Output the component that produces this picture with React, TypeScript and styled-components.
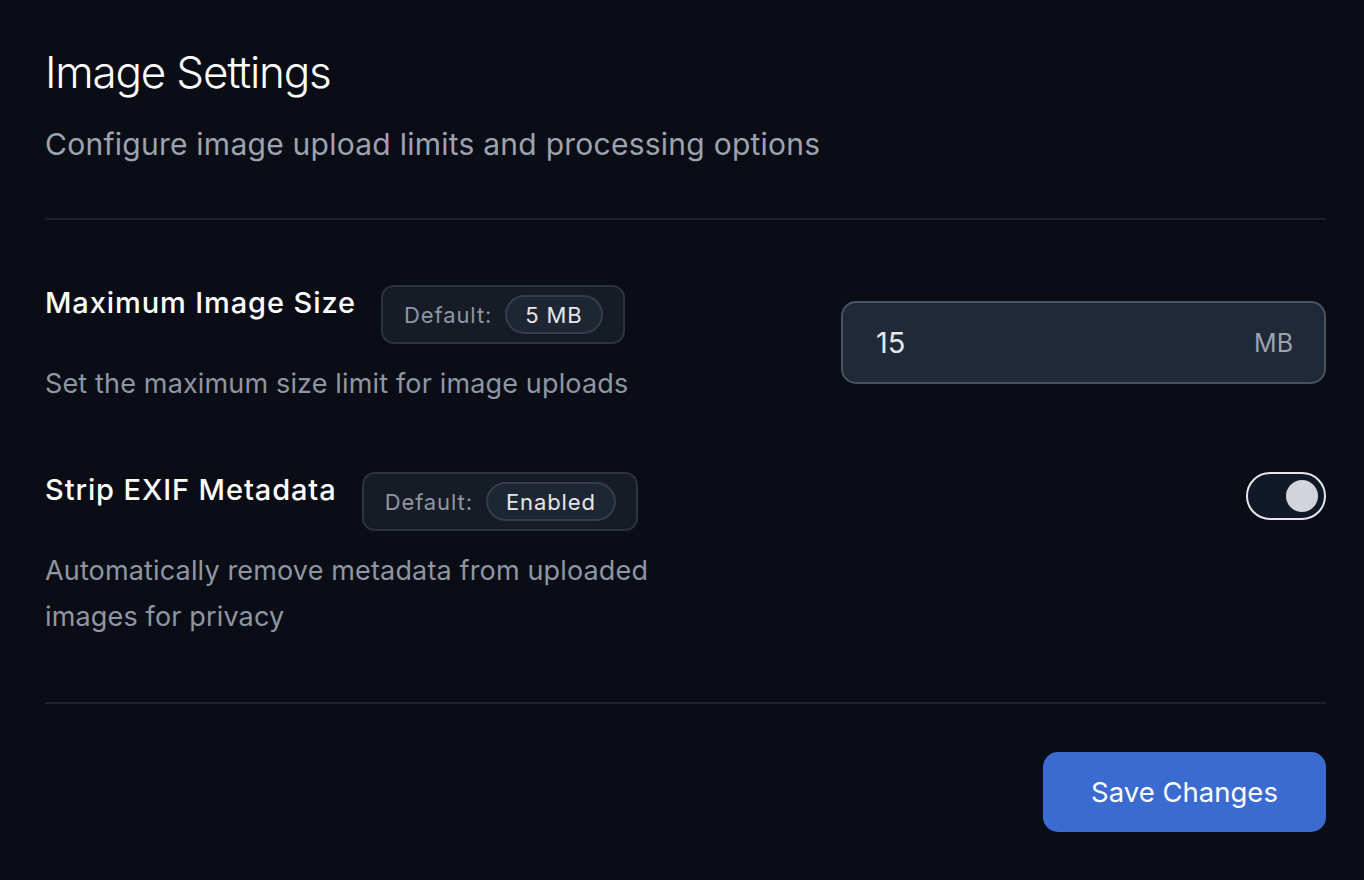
import {FC, useState} from "react";
import styled, {createGlobalStyle} from "styled-components";

const GlobalStyle = createGlobalStyle`
  html, body {
    margin: 0;
    padding: 0;
    background: #0a0d16;
  }
  body {
    font-family: Inter, "Noto Sans", "Liberation Sans", sans-serif;
    color: #f3f4f6;
  }
  * {
    box-sizing: border-box;
  }
`

const Page = styled.div`
  width: 1364px;
  min-height: 880px;
  padding: 42px 38px 0 45px;
`

const Header = styled.header`
  padding-bottom: 54px;
  border-bottom: 2px solid #1c212c;
`

const Title = styled.h1`
  margin: 0;
  font-size: 44px;
  font-weight: 300;
  letter-spacing: -1.2px;
  line-height: 60px;
  color: #ffffff;
`

const Subtitle = styled.p`
  margin: 22px 0 0;
  font-size: 30px;
  line-height: 40px;
  font-weight: 400;
  letter-spacing: 0.25px;
  color: #9ca3af;
`

const Rows = styled.div`
  display: flex;
  flex-direction: column;
  gap: 65px;
  padding: 65px 0 62px;
  border-bottom: 2px solid #1c212c;
`

const Row = styled.div`
  display: flex;
  justify-content: space-between;
  align-items: flex-start;
`

const Info = styled.div`
  max-width: 640px;
`

const LabelLine = styled.div`
  display: flex;
  align-items: flex-start;
  gap: 25px;
`

const Label = styled.span`
  font-size: 29px;
  line-height: 36px;
  font-weight: 500;
  color: #ffffff;
  letter-spacing: 0.9px;
`

const DefaultBadge = styled.span`
  display: inline-flex;
  align-items: center;
  gap: 13px;
  height: 59px;
  padding: 0 20px 0 21px;
  border: 2px solid #2b3240;
  border-radius: 13px;
  background: #161b26;
  font-size: 22px;
  letter-spacing: 0.9px;
  color: #8e96a4;
`

const DefaultValue = styled.span`
  display: inline-flex;
  align-items: center;
  height: 39px;
  padding: 0 18px;
  border: 2px solid #343c4b;
  border-radius: 20px;
  background: #1f2633;
  color: #e5e7eb;
  font-size: 22px;
`

const Description = styled.p`
  margin: 17px 0 0;
  font-size: 27px;
  line-height: 46px;
  letter-spacing: 0.15px;
  color: #8e96a4;
`

const NumberField = styled.label`
  display: flex;
  align-items: center;
  justify-content: space-between;
  width: 485px;
  height: 83px;
  margin-top: 16px;
  padding: 0 31px 0 33px;
  border: 2px solid #4a5261;
  border-radius: 15px;
  background: #202938;
`

const NumberInput = styled.input`
  width: 200px;
  border: none;
  outline: none;
  background: transparent;
  font-family: inherit;
  font-size: 29px;
  color: #e5e7eb;
  padding: 0;
`

const Unit = styled.span`
  font-size: 25px;
  color: #9ca3af;
`

const Toggle = styled.button<{ $on: boolean }>`
  position: relative;
  width: 80px;
  height: 48px;
  padding: 0;
  border: 2px solid #e5e7eb;
  border-radius: 24px;
  background: #111827;
  cursor: pointer;

  &::after {
    content: "";
    position: absolute;
    top: 6px;
    left: ${props => props.$on ? '38px' : '6px'};
    width: 32px;
    height: 32px;
    border-radius: 50%;
    background: #d1d5db;
  }
`

const Footer = styled.div`
  display: flex;
  justify-content: flex-end;
  padding-top: 48px;
`

const SaveButton = styled.button`
  width: 283px;
  height: 80px;
  border: none;
  border-radius: 15px;
  background: #3b6bd0;
  color: #ffffff;
  font-family: inherit;
  font-size: 27.5px;
  font-weight: 400;
  cursor: pointer;
`

const App: FC = () => {
    const [size, setSize] = useState("15")
    const [strip, setStrip] = useState(true)

    return (
        <Page>
            <GlobalStyle/>
            <Header>
                <Title>Image Settings</Title>
                <Subtitle>Configure image upload limits and processing options</Subtitle>
            </Header>

            <Rows>
                <Row>
                    <Info>
                        <LabelLine>
                            <Label>Maximum Image Size</Label>
                            <DefaultBadge>Default: <DefaultValue>5 MB</DefaultValue></DefaultBadge>
                        </LabelLine>
                        <Description>Set the maximum size limit for image uploads</Description>
                    </Info>
                    <NumberField>
                        <NumberInput value={size} onChange={e => setSize(e.target.value)}/>
                        <Unit>MB</Unit>
                    </NumberField>
                </Row>

                <Row>
                    <Info>
                        <LabelLine>
                            <Label>Strip EXIF Metadata</Label>
                            <DefaultBadge>Default: <DefaultValue>Enabled</DefaultValue></DefaultBadge>
                        </LabelLine>
                        <Description>Automatically remove metadata from uploaded images for privacy</Description>
                    </Info>
                    <Toggle $on={strip} onClick={() => setStrip(!strip)} aria-label="Strip EXIF Metadata"/>
                </Row>
            </Rows>

            <Footer>
                <SaveButton>Save Changes</SaveButton>
            </Footer>
        </Page>
    )
}

export default App
